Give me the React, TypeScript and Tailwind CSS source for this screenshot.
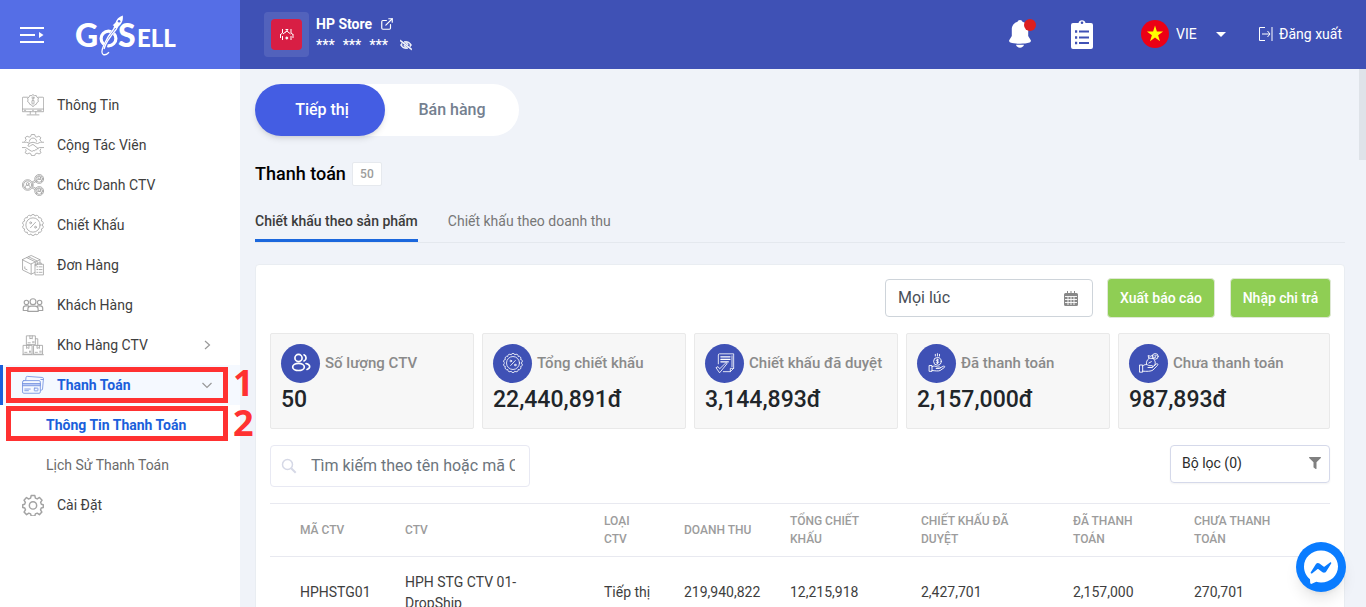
import type { ReactNode } from 'react';
import { FiExternalLink } from 'react-icons/fi';
import { FaRegEyeSlash, FaFilter } from 'react-icons/fa';

type IconProps = {
  children: ReactNode;
  size?: string;
  weight?: number;
};

function LineIcon({ children, size = 'size-[22px]', weight = 0.8 }: IconProps) {
  return (
    <svg
      viewBox="0 0 24 24"
      className={`${size} shrink-0`}
      fill="none"
      stroke="currentColor"
      strokeWidth={weight}
      strokeLinecap="round"
      strokeLinejoin="round"
      aria-hidden="true"
    >
      {children}
    </svg>
  );
}

const SEAL_ANGLES = Array.from({ length: 14 }, (_, i) => i);

function sealPath() {
  const point = (i: number) => {
    const a = (i / 14) * Math.PI * 2;
    return `${(12 + Math.cos(a) * 10).toFixed(2)} ${(12 + Math.sin(a) * 10).toFixed(2)}`;
  };
  return `M${point(0)}${SEAL_ANGLES.map((i) => `A2.3 2.3 0 0 1 ${point(i + 1)}`).join('')}Z`;
}

function SealShape() {
  return (
    <>
      <path d={sealPath()} />
      <circle cx="12" cy="12" r="7.8" />
      <path d="M9.2 15l5.600-6" />
      <circle cx="9.4" cy="9.6" r="1" />
      <circle cx="14.700" cy="14.400" r="1" />
    </>
  );
}

function Person({ x, y, r }: { x: number; y: number; r: number }) {
  return (
    <g transform={`translate(${x} ${y})`}>
      <circle r={r} />
      <circle r={r - 1.3} />
      <circle cy="-1.2" r="1.500" />
      <path d="M-2.600 2.800v-.8c0-1.200.8-1.600 1.600-1.600h2c.8 0 1.600.6 1.600 1.600v.8" />
    </g>
  );
}

function Box({ x, y }: { x: number; y: number }) {
  return (
    <g transform={`translate(${x} ${y})`}>
      <rect width="9.4" height="9.6" />
      <path d="M3.4 0v3.4l1.3-.9 1.3.9V0M1.4 7.6h2.4M6.6 7.6v-1.4M7.8 7.6v-1.4" />
    </g>
  );
}

const menu = [
  {
    label: 'Thông Tin',
    icon: (
      <>
        <path d="M6 3.5H1.200a.8.8 0 0 0-.8.8v15h23.200v-15a.8.8 0 0 0-.8-.8H18M.4 16.400h23.200M9 19.300v2.600M15 19.300v2.600M5.500 22.800h13M2.500 17.800h1.500M11.500 17.800h1M17 17.800h4" />
        <path d="M12 .8l1.600 1 2-.1.7 1.800 1.600 1-.5 1.900.5 1.900-1.600 1.100-.7 1.800-2 .8L12 14l-1.600-2-2-.8-.7-1.800-1.600-1.100.5-1.900-.5-1.900 1.600-1 .7-1.800 2 .1z" />
        <circle cx="12" cy="4.200" r="1.100" />
        <rect x="10.900" y="6.600" width="2.200" height="4.400" rx="1" />
      </>
    ),
  },
  {
    label: 'Cộng Tác Viên',
    icon: (
      <>
        <path d="M3 8l1.600-1.600L3.400 4l2.200-1.600 2.200 1 1.600-.6.8-2.200h3.600l.8 2.200 1.600.6 2.200-1L20.600 4l-1.200 2.400L21 8M8 8c.4-2.200 2-3.600 4-3.600s3.600 1.400 4 3.600" />
        <path d="M0 9h5l3 1 4-1 5 1.400 3-1.400h4M0 14.800h4l6 3.800c1 .6 2 .2 2.200-.6 1.200.6 2.200.2 2.400-.8 1.200.4 2-.2 2-1.200l2.400-1.200h5M8 10l-1.600 3c1 .8 2.600.6 3.600-.8l2-.8 5.600 4.400" />
        <path d="M4 17l.6 1.400-1.200 2 2.200 1.400 2.200-1 1.800.8.8 2h3.400l.8-2 1.800-.8 2.200 1 2.200-1.400-1.200-2 .8-2" />
      </>
    ),
  },
  {
    label: 'Chức Danh CTV',
    icon: (
      <>
        <Person x={6.200} y={12} r={5.800} />
        <Person x={18.800} y={5.400} r={4.900} />
        <Person x={18.800} y={18.600} r={4.900} />
        <path d="M11.200 8.600l3-1.600M12 10l2.800-1.400M11.200 15.400l3 1.600M12 14l2.800 1.400" />
      </>
    ),
  },
  { label: 'Chiết Khấu', icon: <SealShape /> },
  {
    label: 'Đơn Hàng',
    icon: (
      <>
        <path d="M.6 6L10 1.600l9.600 4.600L10 10.800zM.6 6v11.400L10 22l4-1.800M10 10.800V22M19.600 6.200v4M5 3.900l9.500 4.600v4.400l2-1V7.600L7 3M3 14v2l2.500 1.200" />
        <path d="M14.600 11.200h8.800v11.600h-8.800z" />
        <path d="M17 11v-1.200h4V11M16.200 14h1M16.200 17h1M16.200 20h1M18.800 14h3M18.800 17h3M18.800 20h3" />
      </>
    ),
  },
  {
    label: 'Khách Hàng',
    weight: 1.3,
    icon: (
      <>
        <circle cx="12" cy="8.400" r="3.200" />
        <circle cx="4.800" cy="9.200" r="2.400" />
        <circle cx="19.200" cy="9.200" r="2.400" />
        <path d="M6.400 19v-2.400c0-2 1.600-3.400 3.600-3.400h4c2 0 3.600 1.400 3.600 3.400V19zM6.400 18H1.400v-2.400c0-1.600 1-2.600 2.600-2.600h3M17.600 18h5v-2.400c0-1.600-1-2.600-2.600-2.600h-3" />
      </>
    ),
  },
  {
    label: 'Kho Hàng CTV',
    icon: (
      <>
        <Box x={5.200} y={2} />
        <Box x={1.600} y={12.400} />
        <Box x={13} y={12.400} />
        <path d="M14.600 5.200h2.600v7M.6 22.600h22.800" />
      </>
    ),
    arrow: 'right',
  },
  {
    label: 'Thanh Toán',
    icon: (
      <>
        <path d="M4 7.200l.4-3.400a1.300 1.300 0 0 1 1.400-1.200l16.400 1.200a1.300 1.300 0 0 1 1.200 1.400l-1 11.200a1.300 1.300 0 0 1-1.400 1.200h-.6" />
        <rect x=".6" y="7.200" width="19.400" height="13.800" rx="1.400" fill="#f5f9ff" />
        <path d="M.6 10.400H20v2.400H.6z" fill="#bccbf5" />
        <path d="M3 16.400h6M3 18.200h4" />
        <rect x="13.400" y="15.400" width="4" height="3" rx=".5" />
        <path d="M20.600 6h2.400" />
      </>
    ),
    arrow: 'down',
    active: true,
    children: ['Thông Tin Thanh Toán', 'Lịch Sử Thanh Toán'],
  },
  {
    label: 'Cài Đặt',
    weight: 1.6,
    icon: (
      <>
        <path d="M10 1.700h4l.6 2.800 2 .9 2.500-1.600 2.800 2.900-1.600 2.400.8 2 2.100.6v3l-2.200.6-.8 2 1.500 2.400-2.700 2.800-2.400-1.600-2 .8-.6 2.300h-4l-.6-2.300-2-.8-2.400 1.600-2.800-2.800 1.600-2.400-.8-2-2.200-.6v-3l2.100-.6.8-2-1.500-2.400L4.900 3.800 7 5.400l2.400-.9z" />
        <circle cx="12" cy="12.500" r="4" />
      </>
    ),
  },
];

const stats = [
  {
    label: 'Số lượng CTV',
    value: '50',
    weight: 2,
    icon: (
      <>
        <circle cx="9" cy="6" r="4.300" />
        <ellipse cx="9" cy="16.700" rx="7" ry="4.300" />
        <path d="M15.600 2.200a4 4 0 0 1 0 7.400M18 12.600c2.600.6 4.400 1.800 4.400 3.600 0 1.700-1.300 2.900-3.200 3.600" />
      </>
    ),
  },
  { label: 'Tổng chiết khấu', value: '22,440,891đ', weight: 1, icon: <SealShape /> },
  {
    label: 'Chiết khấu đã duyệt',
    value: '3,144,893đ',
    weight: 1,
    icon: (
      <>
        <path d="M4 13V2.400a1.400 1.400 0 0 1 1.400-1.400h17v17.400l-4 4H10M22.400 18.400h-4v4M20.400 3.400v13" />
        <path d="M7 4.600h11M7 7.600h11M7 10.600h9" strokeWidth="1.500" />
        <path d="M1.600 17.400l2-1 2 2.600 7.600-7.400 1.400 1-8.800 10.800z" />
      </>
    ),
  },
  {
    label: 'Đã thanh toán',
    value: '2,157,000đ',
    weight: 1.1,
    icon: (
      <>
        <circle cx="12.500" cy="10" r="4.600" />
        <path d="M14 8.400c-.8-.8-2.800-.6-2.800.5 0 1.400 2.800.8 2.800 2.200 0 1.200-2 1.400-3 .5M12.500 7.200v5.600M10 1.600v2M12.500.8v2.800M15 1.600v2" />
        <path d="M3 15h3v7H3zM6 16.400c2.400-1.400 4.400-.6 6 .4h3c1.400 0 1.400 1.800 0 1.800h-4M15.800 17.800l4-2c1.400-.4 2 .8 1 1.600l-5 3.600c-2 1-6 .4-9.800 0" />
      </>
    ),
  },
  {
    label: 'Chưa thanh toán',
    value: '987,893đ',
    weight: 1.1,
    icon: (
      <>
        <circle cx="19.600" cy="4" r="3.400" />
        <path d="M20.800 2.800c-1.600-.8-2.600.4-1.200 1.200s.4 2-1.200 1.200M11.400 3.200l2.800.8 2-1.600.8 4.200-4.800-.4zM12.200 6.200c-2.800 2.400-3.800 4.600-3.200 7.400M17 6.600c3 3 3.200 6 1.600 8.600" />
        <path d="M1 14.400h3.400V23H1zM4.400 15.600c2.400-2.400 5.400-2.200 7.400-.4h4c1.400.2 1.400 2 0 2.200h-5M15.800 17l5.200-4c1.400-.6 2.200.8 1.200 1.800l-5.400 5.600c-2.400 1.800-7.400 1.800-12.400 1.400M11.800 12l3-1.600" />
      </>
    ),
  },
];

const columns = [
  { label: 'Mã CTV', width: 'w-[135px]' },
  { label: 'CTV', width: 'w-[199px]' },
  { label: 'Loại CTV', width: 'w-[80px]' },
  { label: 'Doanh thu', width: 'w-[106px]' },
  { label: 'Tổng chiết khấu', width: 'w-[131px]' },
  { label: 'Chiết khấu đã duyệt', width: 'w-[152px]' },
  { label: 'Đã thanh toán', width: 'w-[121px]' },
  { label: 'Chưa thanh toán', width: 'w-[136px]' },
];

const rows = [
  ['HPHSTG01', 'HPH STG CTV 01-DropShip', 'Tiếp thị', '219,940,822', '12,215,918', '2,427,701', '2,157,000', '270,701'],
];

function Logo() {
  return (
    <svg viewBox="0 0 104 42" className="w-[104px] h-[42px]" role="img" aria-label="GoSell">
      <g fill="#fff" fontFamily="Lato, sans-serif" fontWeight="900">
        <text x="1" y="33" fontSize="32">G</text>
        <text x="44" y="33" fontSize="32">S</text>
        <text x="63" y="33" fontSize="24">ELL</text>
      </g>
      <circle cx="34.500" cy="24.500" r="7.400" fill="none" stroke="#fff" strokeWidth="3.200" />
      <path d="M41 15C33.500 24 29.500 33 30 41" stroke="#556ee6" strokeWidth="3.600" fill="none" />
      <path d="M40.500 14C31.500 25 25.500 38 29 40.300c2 1 4.500-.3 6-2" stroke="#fff" strokeWidth="1.300" fill="none" />
      <path d="M42.500 15C36.500 22 31.500 29 30 35" stroke="#fff" strokeWidth="1.300" fill="none" />
      <path d="M48.800 1.500c-4 1.200-6.300 4-7.400 7.200l-2.700 2.500 1.400.8-.8 2.600 2.400-.6.9 1.700 1.900-3.200c3-2.200 5-6.300 4.300-11z" fill="#fff" />
      <circle cx="45.100" cy="7.200" r="1.300" fill="#556ee6" />
    </svg>
  );
}

function Header() {
  return (
    <header className="flex h-[69px] shrink-0 bg-[#3f51b5] text-white">
      <div className="flex items-center w-60 shrink-0 gap-[30px] pl-5 bg-[#556ee6]">
        <button aria-label="Menu" className="h-5">
          <svg viewBox="0 0 24 18" className="w-6 h-[18px]" fill="none" stroke="#fff" strokeWidth="2">
            <path d="M0 2h24M0 9h15M0 16h24" />
            <path d="M19 6l4.500 3-4.500 3z" fill="#fff" stroke="none" />
          </svg>
        </button>
        <a href="#home"><Logo /></a>
      </div>
      <div className="flex flex-1 items-center px-6 pb-px">
        <div className="flex items-center justify-center size-[45px] rounded bg-white/10">
          <svg viewBox="0 0 31 31" className="size-[31px] rounded-sm bg-[#d81e44]" fill="none" stroke="#fff" strokeWidth="1">
            <path d="M11.500 10v4M11.500 17v4M20 10v4M20 17v4M9.500 15.500l2-1.500M22 15.500l-2-1.500M9.500 15v4M22 15v4M12 15l3.800-3 3.800 3M14.500 10.500h2.500l-2.500 3" />
            <circle cx="15.800" cy="19" r="1" fill="#fff" />
          </svg>
        </div>
        <div className="flex flex-col gap-[3px] pl-[7px] text-sm leading-[18px]">
          <a href="#store" className="flex items-center gap-2 font-bold">
            HP Store <FiExternalLink className="size-3.5" />
          </a>
          <div className="flex items-center gap-2 font-medium">
            <span>***</span>
            <span>***</span>
            <span>***</span>
            <button aria-label="Hiện số dư" className="pl-1">
              <FaRegEyeSlash className="size-3" stroke="currentColor" strokeWidth="36" />
            </button>
          </div>
        </div>
        <div className="flex items-center ml-auto">
          <button aria-label="Thông báo" className="relative mr-[39px]">
            <svg viewBox="0 0 24 30" className="w-6 h-[30px]" fill="#fff">
              <path d="M12 1c1.300 0 2.200.8 2.400 1.800 3.600 1 5.800 4 5.800 7.600v6.600l2.600 4.200c.4.900-.2 2-1.200 2.400-5 1.600-14.200 1.600-19.200 0-1-.4-1.600-1.500-1.200-2.400L3.800 17v-6.600c0-3.600 2.200-6.600 5.800-7.600C9.800 1.800 10.700 1 12 1zM8 25.800h8c-.4 1.600-2 2.900-4 2.900s-3.600-1.300-4-2.900z" />
            </svg>
            <span className="absolute -right-1 top-0 size-3 rounded-full bg-[#dc1f1f]" />
          </button>
          <button aria-label="Đơn hàng">
            <svg viewBox="0 0 22 30" className="w-[22px] h-[30px]">
              <path d="M2 4h5.500a3.600 3.600 0 0 1 7 0H20a2 2 0 0 1 2 2v22a2 2 0 0 1-2 2H2a2 2 0 0 1-2-2V6a2 2 0 0 1 2-2z" fill="#fff" />
              <circle cx="11" cy="3.800" r="1.300" fill="#3f51b5" />
              <path d="M8 12.500h10M8 18.500h10M8 24h10" stroke="#3f51b5" strokeWidth="2" />
              <path d="M4 12.500h2.200M4 18.500h2.200M4 24h2.200" stroke="#3f51b5" strokeWidth="2.400" />
            </svg>
          </button>
          <svg viewBox="0 0 28 28" className="size-7 ml-12 rounded-full bg-[#ec0015]" fill="#ff0">
            <path d="M14 5.500l1.900 6h6.200l-5 3.700 1.900 6-5-3.700-5 3.700 1.900-6-5-3.700h6.200z" />
          </svg>
          <div className="relative ml-[7px] mr-8">
            <select aria-label="Ngôn ngữ" className="w-[50px] appearance-none text-sm outline-none">
              <option>VIE</option>
              <option>ENG</option>
            </select>
            <span className="absolute right-0 top-2.5 border-x-5 border-t-5 border-x-transparent border-t-white pointer-events-none" />
          </div>
          <a href="#logout" className="flex items-center gap-1.5 text-sm">
            <svg viewBox="0 0 15 16" className="w-[15px] h-4" fill="none" stroke="#fff" strokeWidth="1">
              <path d="M7 1.500H1.500v13H7M14 1v14" />
              <path d="M4 8h8M9.500 5L12 8l-2.500 3" />
            </svg>
            Đăng xuất
          </a>
        </div>
      </div>
    </header>
  );
}

function Arrow({ direction }: { direction: string }) {
  return (
    <svg viewBox="0 0 12 12" className="size-3 ml-auto mr-[27px]" fill="none" stroke="#999" strokeWidth="1.200">
      <path d={direction === 'right' ? 'M4 2l4.500 4L4 10' : 'M1.500 4L6 8.500 10.500 4'} />
    </svg>
  );
}

function Sidebar() {
  return (
    <aside className="relative z-10 w-60 shrink-0 pt-4 bg-white text-sm text-[#3e3e3e]">
      <nav>
        {menu.map((item) => (
          <div key={item.label}>
            <a
              href="#menu"
              className={
                item.active
                  ? 'relative flex items-center h-10 gap-[13px] pl-[19px] border-l-3 border-[#1b5fdb] bg-[#f5f9ff] font-bold text-[#1b5fdb]'
                  : 'flex items-center h-10 gap-[13px] pl-[22px]'
              }
            >
              <span className={item.active ? 'text-[#6f8ee0]' : 'text-[#a3a3a3]'}>
                <LineIcon weight={item.weight ?? 0.9}>{item.icon}</LineIcon>
              </span>
              {item.label}
              {item.arrow && <Arrow direction={item.arrow} />}
              {item.active && <Marker number={1} box="inset-y-0.5" />}
            </a>
            {item.children?.map((child, i) => (
              <a
                key={child}
                href="#submenu"
                className={
                  i === 0
                    ? 'relative flex items-center h-10 pl-[46px] font-bold text-[#1b5fdb]'
                    : 'flex items-center h-10 pl-[46px] text-[#6b6b6b]'
                }
              >
                {child}
                {i === 0 && <Marker number={2} box="top-px bottom-1" />}
              </a>
            ))}
          </div>
        ))}
      </nav>
    </aside>
  );
}

function Marker({ number, box }: { number: number; box: string }) {
  return (
    <>
      <span className={`absolute right-3 w-[222px] border-5 border-[#ff3131] ${box}`} />
      <span className="absolute left-full top-0 -ml-[7px] font-['Open_Sans',sans-serif] text-4xl leading-9 font-bold text-[#ff3131]">
        {number}
      </span>
    </>
  );
}

function StatCard({ stat }: { stat: (typeof stats)[number] }) {
  return (
    <div className="h-24 px-2.5 py-2.5 not-last:mr-2 border border-[#e9e9e9] rounded-xs bg-[#f7f7f7]">
      <div className="flex items-center gap-[5px] h-[38px] whitespace-nowrap text-[15px] font-medium text-[#8a8a8a]">
        <span className="flex items-center justify-center size-[39px] shrink-0 rounded-full bg-[#3f51b5] text-white">
          <LineIcon size="size-5" weight={stat.weight}>{stat.icon}</LineIcon>
        </span>
        {stat.label}
      </div>
      <p className="text-[23px] leading-9 font-medium text-[#212529]">{stat.value}</p>
    </div>
  );
}

export default function App() {
  return (
    <div className="flex flex-col h-screen overflow-hidden bg-[#f0f3f9] font-[Roboto,sans-serif]">
      <Header />
      <div className="flex flex-1 min-h-0">
        <Sidebar />
        <main className="relative flex-1 min-w-0 overflow-hidden pt-[15px] pl-[15px] pr-[21px]">
          <div className="flex w-[264px] rounded-full bg-white font-medium">
            <button className="w-[130px] h-[52px] pl-1 rounded-full bg-[#445de3] text-white shadow-md">Tiếp thị</button>
            <button className="flex-1 text-[#74808f]">Bán hàng</button>
          </div>

          <div className="flex items-center h-6 gap-1.5 mt-[26px]">
            <h1 className="text-lg font-medium text-black">Thanh toán</h1>
            <span className="flex items-center justify-center w-[30px] h-6 border border-[#e6e9ee] rounded-xs bg-white text-xs font-medium text-[#9c9c9c]">
              50
            </span>
          </div>

          <div className="flex gap-[30px] mt-3.5 border-b border-[#e4e8ee] text-sm">
            <button className="h-[42px] pt-0.5 border-b-3 border-[#1b67dd] font-medium text-[#3c3c3c]">
              Chiết khấu theo sản phẩm
            </button>
            <button className="h-[42px] pb-px text-[#777]">Chiết khấu theo doanh thu</button>
          </div>

          <section className="mt-[21px] px-3.5 py-[13px] border border-[#e9edf2] rounded-sm bg-white">
            <div className="flex items-center justify-end h-10 mb-[15px] -mr-px">
              <label className="flex items-center w-[208px] h-[38px] px-3 mr-3.5 border border-[#ced4da] rounded-sm text-[#495057]">
                <input readOnly aria-label="Thời gian" defaultValue="Mọi lúc" className="flex-1 min-w-0 outline-none" />
                <svg viewBox="0 0 14 15" className="w-3.5 h-[15px] mr-0.5" fill="#888">
                  <path d="M3 0h1v2h2.500V0h1v2H10V0h1v2h1.500A1.500 1.500 0 0 1 14 3.500v10a1.500 1.500 0 0 1-1.500 1.500h-11A1.500 1.500 0 0 1 0 13.500v-10A1.500 1.500 0 0 1 1.500 2H3z" />
                  <path d="M1 5.500h12M1 8.500h12M1 11.500h12M4 5.500v8.500M7 5.500v8.500M10 5.500v8.500" stroke="#fff" strokeWidth=".9" />
                </svg>
              </label>
              <button className="w-[108px] h-10 mr-[15px] border border-[#dfe8d5] rounded-sm bg-[#8fce54] text-sm font-medium text-white">
                Xuất báo cáo
              </button>
              <button className="w-[101px] h-10 border border-[#dfe8d5] rounded-sm bg-[#8fce54] text-sm font-medium text-white">
                Nhập chi trả
              </button>
            </div>

            <div className="grid grid-cols-5">
              {stats.map((stat) => (
                <StatCard key={stat.label} stat={stat} />
              ))}
            </div>

            <div className="flex items-start justify-between my-4">
              <label className="flex items-center w-[260px] h-[42px] gap-3.5 px-2.5 border border-[#e8e9f3] rounded-sm">
                <svg viewBox="0 0 16 16" className="size-4 shrink-0" fill="none" stroke="#d5d8e6" strokeWidth="1.500">
                  <circle cx="6.500" cy="6.500" r="5" />
                  <path d="M10.200 10.200l4.500 4.500" strokeWidth="2" />
                </svg>
                <input
                  type="text"
                  aria-label="Tìm kiếm"
                  placeholder="Tìm kiếm theo tên hoặc mã CTV"
                  className="flex-1 min-w-0 mr-1 outline-none placeholder:text-[#6c757d]"
                />
              </label>
              <button className="flex items-center justify-between w-40 h-[38px] pl-[11px] pr-2 pb-0.5 border border-[#d5d9ea] rounded-sm shadow-xs text-sm text-[#2b2b2b]">
                Bộ lọc (0)
                <FaFilter className="size-3 text-[#808080]" />
              </button>
            </div>

            <table className="w-full table-fixed text-left text-sm text-[#3e3e3e]">
              <thead className="border-y border-[#e8e9f0] text-xs leading-[18px] uppercase text-[#9c9c9c]">
                <tr className="h-[53px]">
                  {columns.map((col) => (
                    <th key={col.label} className={`${col.width} pr-8 first:pl-[30px] first:pr-0 font-medium`}>{col.label}</th>
                  ))}
                </tr>
              </thead>
              <tbody>
                {rows.map((row) => (
                  <tr key={row[0]} className="h-[72px] leading-[21px]">
                    {row.map((cell, i) => (
                      <td key={columns[i].label} className="pr-8 first:pl-[30px] first:pr-0">
                        <span className="block max-w-[140px]">{cell}</span>
                      </td>
                    ))}
                  </tr>
                ))}
              </tbody>
            </table>
          </section>

          <span className="absolute right-0 top-0 w-[7px] h-[91px] bg-[#dfe3e9]" />
        </main>
      </div>

      <button aria-label="Messenger" className="fixed right-5 bottom-[15px] size-[50px] rounded-full bg-[#0a7cff] shadow-lg">
        <svg viewBox="0 0 50 50" className="size-[50px]">
          <path d="M25 8.500c9.500 0 17 7 17 16s-7.500 16-17 16c-1.700 0-3.300-.2-4.800-.7l-4.400 2c-.9.300-1.600-.2-1.600-1l-.2-3.600C10.300 34.300 8 29.700 8 24.500c0-9 7.500-16 17-16z" fill="#fff" />
          <path d="M14.800 30.300l5-8c.8-1.300 2.500-1.600 3.700-.7l4 3c.4.300.8.300 1.200 0l5.300-4.100c.7-.5 1.700.3 1.200 1.100l-5 8c-.8 1.200-2.500 1.600-3.700.7l-4-3c-.4-.3-.8-.3-1.200 0L16 31.400c-.8.500-1.700-.3-1.200-1.100z" fill="#0a7cff" />
        </svg>
      </button>
    </div>
  );
}
